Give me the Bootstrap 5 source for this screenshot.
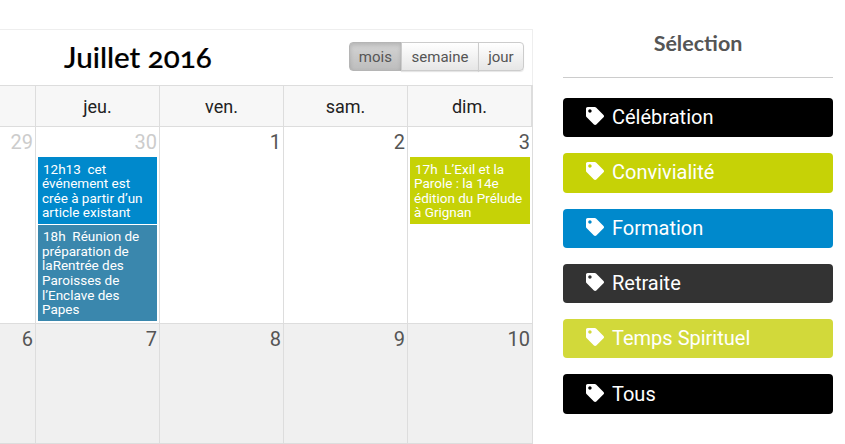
<!DOCTYPE html>
<html lang="fr">
<head>
    <meta charset="UTF-8">
    <meta name="viewport" content="width=device-width, initial-scale=1.0">
    <title>Calendrier</title>
    <link href="https://cdn.jsdelivr.net/npm/bootstrap@5.3.0/dist/css/bootstrap.min.css" rel="stylesheet">
    <style>
        body { font-family: Roboto, sans-serif; background: #fff; overflow: hidden; height: 444px; }
        .page-wrap { width: 845px; padding-top: 29px; }
        .cal-col { width: 533px; flex: none; }
        .cal-toolbar { height: 56px; border-top: 1px solid #eee; border-right: 1px solid #eee; padding-left: 64px; padding-right: 8px; padding-bottom: 2px; }
        .cal-title { font-family: Lato, sans-serif; font-weight: 500; font-size: 29.6px; color: #000; margin: 0; font-variant-numeric: oldstyle-nums; -webkit-text-stroke: 0.2px #000; }
        .view-btn { font-size: 15px; line-height: 20px; color: #555; padding: 3.5px 9.33px; border: 1px solid #ccc; border-radius: 4px; background: linear-gradient(#fff, #e6e6e6); box-shadow: 0 1px 1px rgba(0,0,0,.1); }
        .view-btn.is-on { background: linear-gradient(#d4d4d4, #bdbdbd); border-color: #b5b5b5; box-shadow: inset 0 2px 4px rgba(0,0,0,.15); color: #555; }
        .cal-grid { display: grid; grid-template-columns: 36px repeat(4, 124px); width: 533px; border-right: 1px solid #ddd; border-bottom: 1px solid #ddd; border-top: 1px solid #ddd; }
        .cal-head { height: 41px; background: #f7f7f7; border-right: 1px solid #ddd; border-bottom: 1px solid #ddd; font-size: 18px; color: #222; line-height: 42px; text-align: center; }
        .cal-head:last-child, .cal-day:nth-child(5n) { border-right: 0; }
        .cal-day { border-right: 1px solid #ddd; padding: 2px 2px 0; text-align: right; color: #555; font-size: 20px; line-height: 27px; min-width: 0; }
        .week-a { height: 197px; border-bottom: 1px solid #ddd; }
        .week-b { height: 119px; background: #f0f0f0; }
        .other-month { color: #ccc; }
        .cal-event { display: block; margin: 1px 0; padding: 4.5px 4px 3.9px; color: #fff; font-size: 13.5px; line-height: 14.6px; text-align: left; text-decoration: none; text-indent: 1px; }
        .ev-blue { background: #0089cc; }
        .ev-steel { background: #3a87ad; }
        .ev-green { background: #c6d206; }
        .side-col { width: 270px; margin-left: 30px; flex: none; }
        .side-title { font-family: Lato, sans-serif; font-weight: 700; font-size: 21.5px; color: #555; text-align: center; line-height: 28px; }
        .side-rule { border-top: 1px solid #ccc; opacity: 1; margin: 20px 0 20px; }
        .tag-btn { height: 39.3px; border-radius: 4px; color: #fff; font-size: 20px; padding-left: 23px; padding-bottom: 1px; gap: 8px; text-decoration: none; }
        .tag-btn svg { width: 18px; height: 18px; fill: #fff; margin-top: -2px; flex: none; }
        .tag-black { background: #000; }
        .tag-green { background: #c6d206; }
        .tag-blue { background: #0089cc; }
        .tag-dark { background: #333; }
        .tag-lime { background: #d2d93a; }
    </style>
</head>
<body>
    <svg class="d-none">
        <symbol id="tag" viewBox="0 0 512 512">
            <path fill-rule="evenodd" d="M0 252.118V48C0 21.49 21.49 0 48 0h204.118a48 48 0 0 1 33.941 14.059l211.882 211.882c18.745 18.745 18.745 49.137 0 67.882L293.823 497.941c-18.745 18.745-49.137 18.745-67.882 0L14.059 286.059A48 48 0 0 1 0 252.118zM112 64c-26.51 0-48 21.49-48 48s21.49 48 48 48 48-21.49 48-48-21.49-48-48-48z"/>
        </symbol>
    </svg>
    <div class="page-wrap d-flex">
        <div class="cal-col">
            <div class="cal-toolbar d-flex align-items-center justify-content-between">
                <h2 class="cal-title">Juillet 2016</h2>
                <div class="btn-group">
                    <button class="btn view-btn is-on">mois</button>
                    <button class="btn view-btn">semaine</button>
                    <button class="btn view-btn">jour</button>
                </div>
            </div>
            <div class="cal-grid">
                <div class="cal-head"></div>
                <div class="cal-head">jeu.</div>
                <div class="cal-head">ven.</div>
                <div class="cal-head">sam.</div>
                <div class="cal-head">dim.</div>

                <div class="cal-day week-a other-month">29</div>
                <div class="cal-day week-a other-month">30
                    <a class="cal-event ev-blue">12h13&nbsp; cet événement est crée à partir d’un article existant</a>
                    <a class="cal-event ev-steel">18h&nbsp; Réunion de préparation de laRentrée des Paroisses de l’Enclave des Papes</a>
                </div>
                <div class="cal-day week-a">1</div>
                <div class="cal-day week-a">2</div>
                <div class="cal-day week-a">3
                    <a class="cal-event ev-green">17h&nbsp; L’Exil et la Parole : la 14e édition du Prélude à Grignan</a>
                </div>

                <div class="cal-day week-b">6</div>
                <div class="cal-day week-b">7</div>
                <div class="cal-day week-b">8</div>
                <div class="cal-day week-b">9</div>
                <div class="cal-day week-b">10</div>
            </div>
        </div>
        <div class="side-col">
            <div class="side-title">Sélection</div>
            <hr class="side-rule">
            <div class="d-flex flex-column gap-3">
                <a class="tag-btn tag-black d-flex align-items-center"><svg><use href="#tag"/></svg>Célébration</a>
                <a class="tag-btn tag-green d-flex align-items-center"><svg><use href="#tag"/></svg>Convivialité</a>
                <a class="tag-btn tag-blue d-flex align-items-center"><svg><use href="#tag"/></svg>Formation</a>
                <a class="tag-btn tag-dark d-flex align-items-center"><svg><use href="#tag"/></svg>Retraite</a>
                <a class="tag-btn tag-lime d-flex align-items-center"><svg><use href="#tag"/></svg>Temps Spirituel</a>
                <a class="tag-btn tag-black d-flex align-items-center"><svg><use href="#tag"/></svg>Tous</a>
            </div>
        </div>
    </div>
    <script src="https://cdn.jsdelivr.net/npm/bootstrap@5.3.0/dist/js/bootstrap.bundle.min.js"></script>
</body>
</html>
